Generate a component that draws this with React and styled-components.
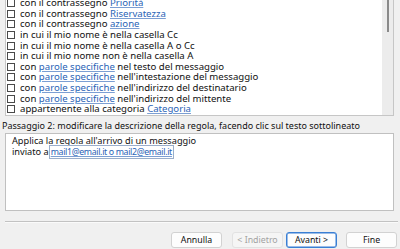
import React from "react";
import styled, { createGlobalStyle } from "styled-components";

const GlobalStyle = createGlobalStyle`
  html, body { margin: 0; padding: 0; background: #f0f0f0; }
  body { font-family: "Noto Sans", "Liberation Sans", sans-serif; color: #111; }
`;

const Dialog = styled.div`
  width: 400px;
  height: 249px;
  overflow: hidden;
  display: flex;
  flex-direction: column;
  background: #f0f0f0;
  font-size: 9px;
`;

const ListBox = styled.div`
  margin: -3px 6px 0 5px;
  height: 119px;
  box-sizing: border-box;
  border: 1px solid #c6c6c6;
  background: #fff;
  display: flex;
`;

const Rows = styled.div`
  flex: 1;
  display: flex;
  flex-direction: column;
  font-size: 9.6px;
`;

const Row = styled.div`
  height: 10.6px;
  display: flex;
  align-items: center;
  padding-left: 1px;
  gap: 5px;
  white-space: nowrap;
  line-height: 10px;
`;

const Box = styled.span`
  width: 8px;
  height: 8px;
  box-sizing: border-box;
  border: 1px solid #4a4a4a;
  background: #fff;
  flex: none;
`;

const Link = styled.span`
  color: #2a63b6;
  text-decoration: underline;
  text-decoration-color: #7c9fd3;
  text-underline-offset: 1px;
`;

const ScrollTrack = styled.div`
  width: 11px;
  background: #ececec;
  display: flex;
  justify-content: center;
`;

const Thumb = styled.div`
  width: 2px;
  height: 34px;
  background: #8a8a8a;
`;

const Label = styled.div`
  margin: 4px 0 0 2px;
  line-height: 11px;
  height: 11px;
  white-space: nowrap;
`;

const DescBox = styled.div`
  margin: 2px 6px 0 5px;
  height: 78px;
  box-sizing: border-box;
  border: 1px solid #c0c0c0;
  background: #fff;
  padding: 1px 6px 0;
  line-height: 11px;
  font-size: 9.2px;
`;

const MailBox = styled.span`
  color: #2a63b6;
  font-size: 8.8px;
  letter-spacing: -0.35px;
  text-decoration: underline;
  text-decoration-color: #7c9fd3;
  outline: 1px solid #9aaecb;
  outline-offset: 0px;
  padding: 0 1px;
  margin-left: 1px;
`;

const Separator = styled.div`
  margin: 10px 2px 0 5px;
  height: 0;
  border-top: 1px solid #c2c2c2;
  border-bottom: 1px solid #fafafa;
`;

const ButtonRow = styled.div`
  margin-top: 9px;
  padding-right: 3px;
  display: flex;
  justify-content: flex-end;
`;

const Button = styled.button`
  width: 51px;
  height: 16px;
  box-sizing: border-box;
  margin-left: ${(p) => p.$gap}px;
  padding: 0;
  font-family: inherit;
  font-size: 8.8px;
  line-height: 14px;
  border-radius: 3px;
  background: ${(p) => (p.$disabled ? "#f5f5f5" : "#fdfdfd")};
  color: ${(p) => (p.$disabled ? "#a2a2a2" : "#111")};
  border: 1px solid
    ${(p) => (p.$primary ? "#3a7fd4" : p.$disabled ? "#e2e2e2" : "#d2d2d2")};
  box-shadow: ${(p) => (p.$primary ? "inset 0 0 0 0.5px #3a7fd4" : "none")};
`;

const rows = [
  ["con il contrassegno ", "Priorità", ""],
  ["con il contrassegno ", "Riservatezza", ""],
  ["con il contrassegno ", "azione", ""],
  ["in cui il mio nome è nella casella Cc", null, ""],
  ["in cui il mio nome è nella casella A o Cc", null, ""],
  ["in cui il mio nome non è nella casella A", null, ""],
  ["con ", "parole specifiche", " nel testo del messaggio"],
  ["con ", "parole specifiche", " nell'intestazione del messaggio"],
  ["con ", "parole specifiche", " nell'indirizzo del destinatario"],
  ["con ", "parole specifiche", " nell'indirizzo del mittente"],
  ["appartenente alla categoria ", "Categoria", ""],
];

export default function App() {
  return (
    <>
      <GlobalStyle />
      <Dialog>
        <ListBox>
          <Rows>
            {rows.map(([a, link, b], i) => (
              <Row key={i}>
                <Box />
                <span>
                  {a}
                  {link && <Link>{link}</Link>}
                  {b}
                </span>
              </Row>
            ))}
          </Rows>
          <ScrollTrack>
            <Thumb />
          </ScrollTrack>
        </ListBox>
        <Label>
          Passaggio 2: modificare la descrizione della regola, facendo clic sul
          testo sottolineato
        </Label>
        <DescBox>
          <div>Applica la regola all'arrivo di un messaggio</div>
          <div>
            inviato a<MailBox>mail1@email.it o mail2@email.it</MailBox>
          </div>
        </DescBox>
        <Separator />
        <ButtonRow>
          <Button $gap={0}>Annulla</Button>
          <Button $gap={10} $disabled>
            &lt; Indietro
          </Button>
          <Button $gap={3} $primary>
            Avanti &gt;
          </Button>
          <Button $gap={9}>Fine</Button>
        </ButtonRow>
      </Dialog>
    </>
  );
}
